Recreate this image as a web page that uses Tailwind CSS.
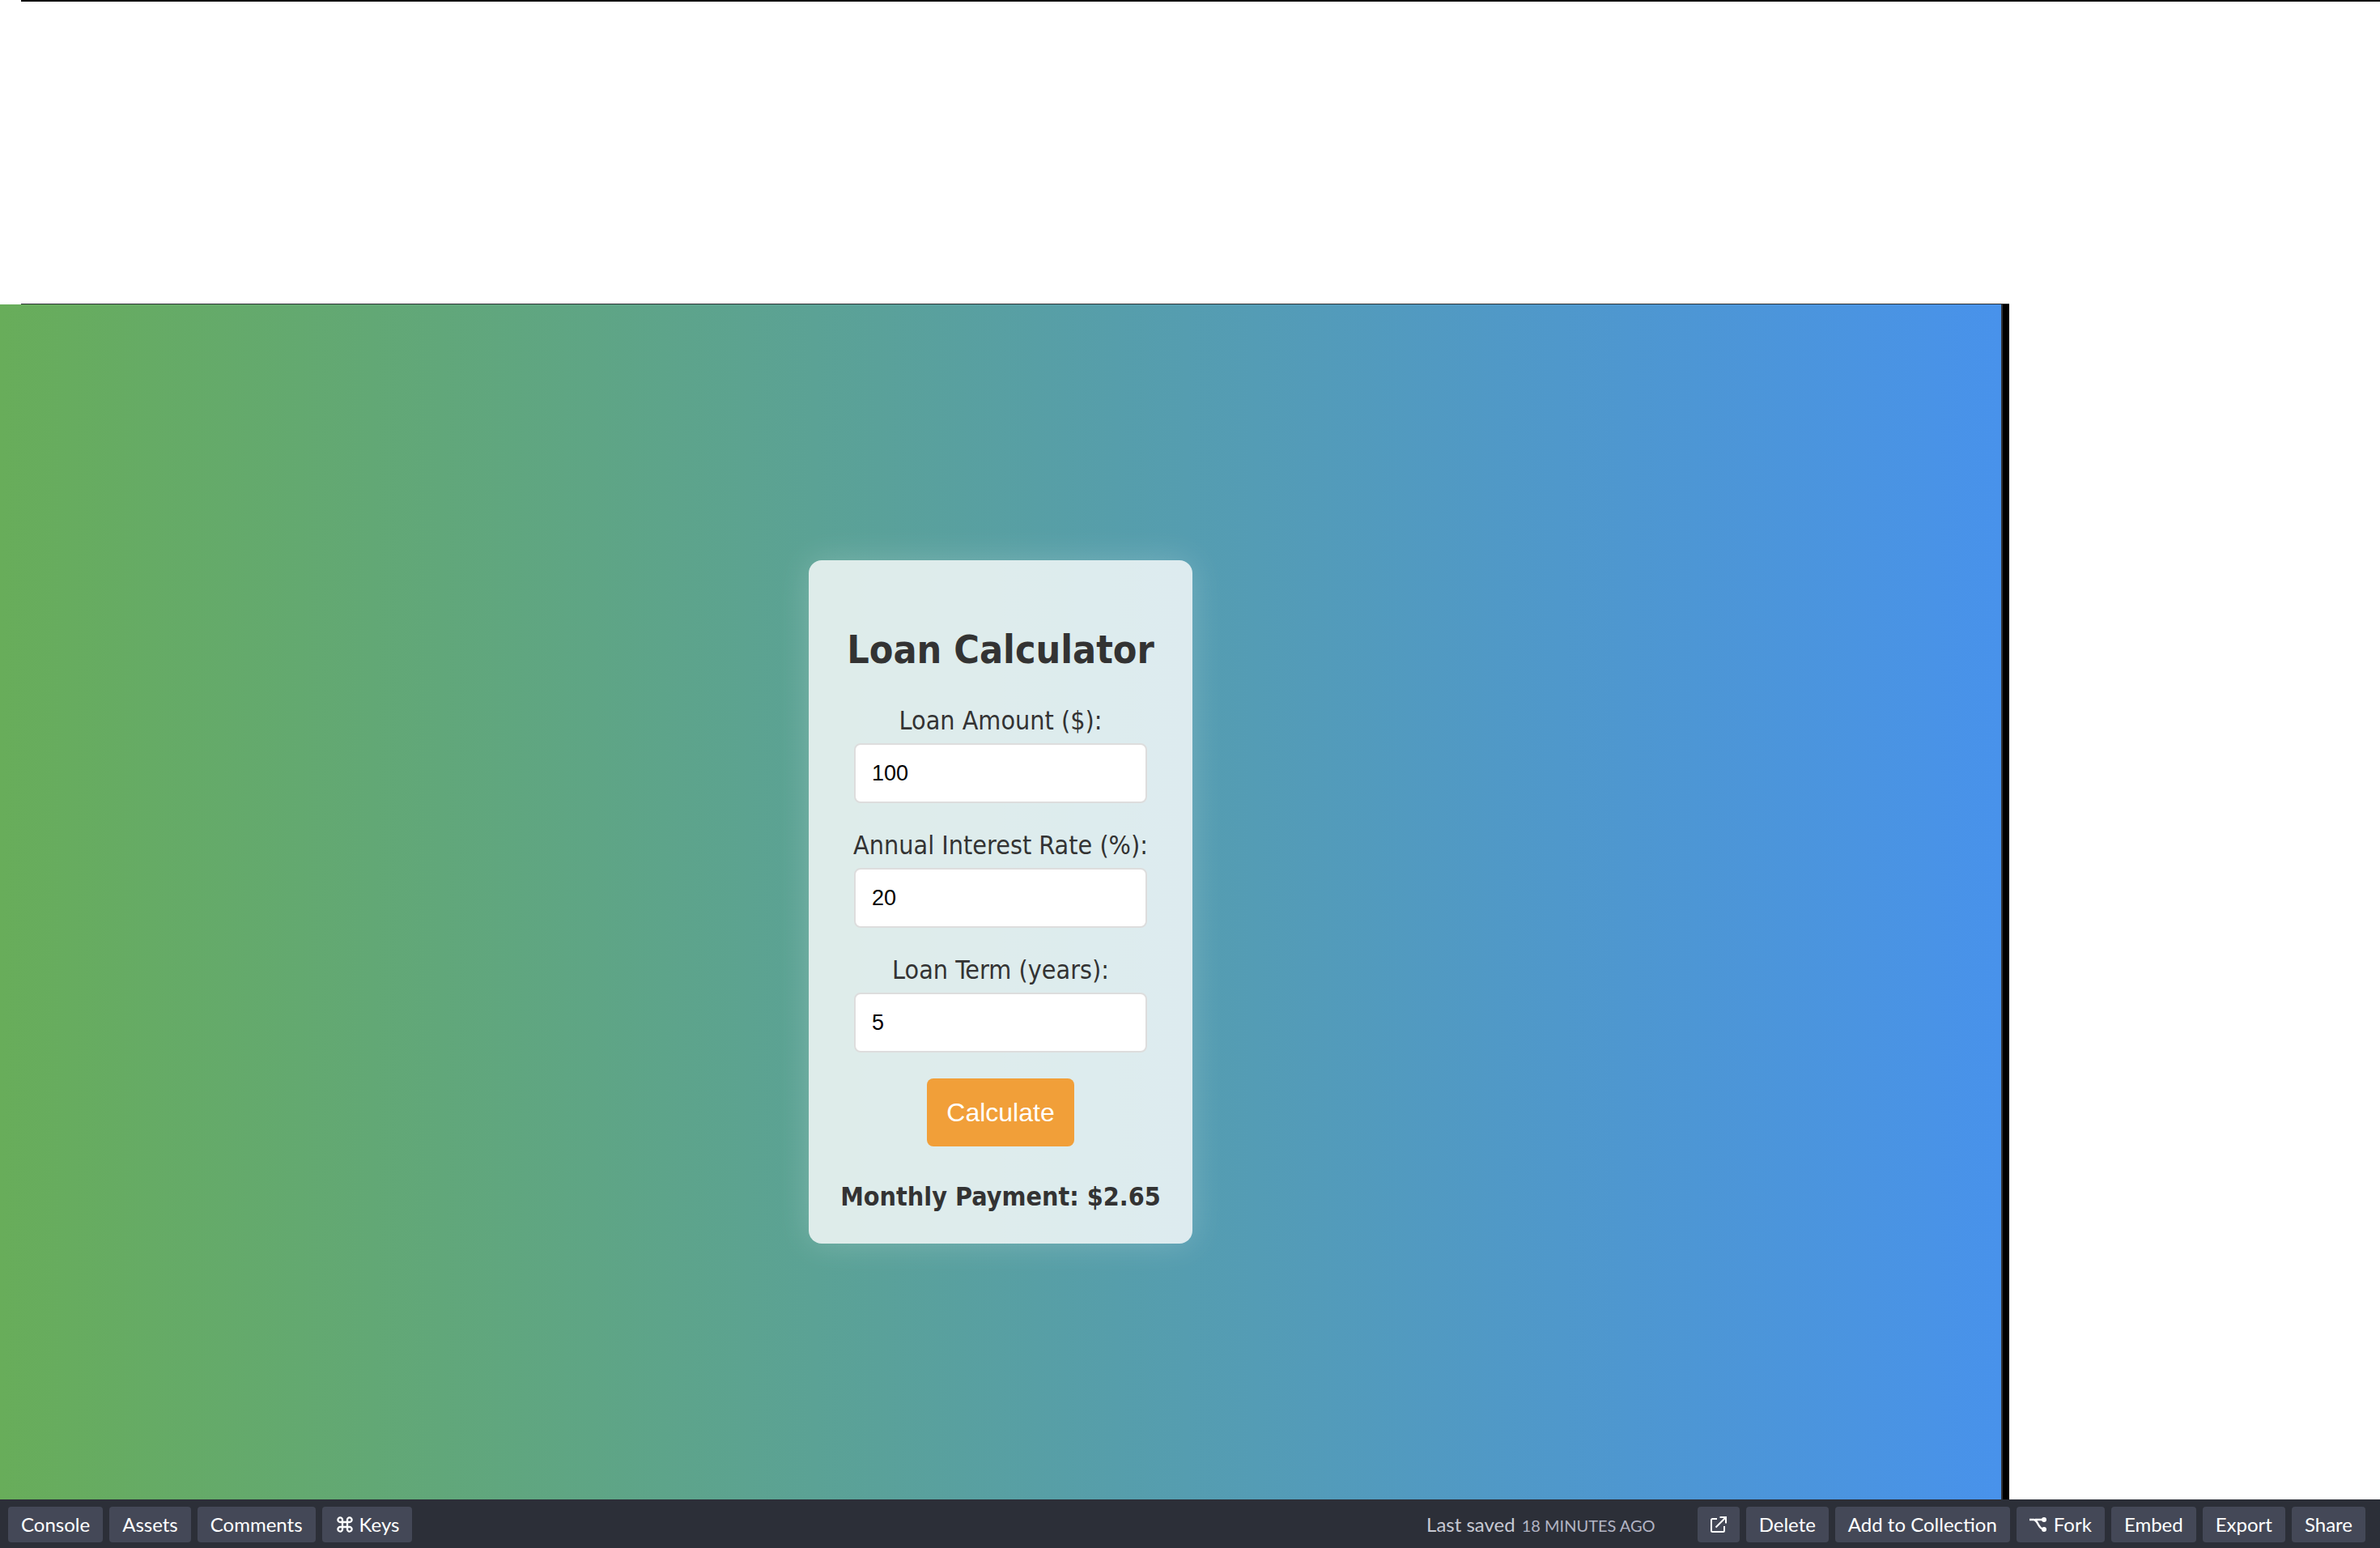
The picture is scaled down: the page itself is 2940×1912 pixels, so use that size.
<!DOCTYPE html>
<html lang="en">
<head>
<meta charset="utf-8">
<title>Loan Calculator</title>
<script src="https://cdn.jsdelivr.net/npm/@tailwindcss/browser@4"></script>
</head>
<body class="flex h-screen flex-col overflow-hidden bg-white">
  <!-- collapsed editor area -->
  <header class="flex h-[376px] shrink-0 flex-col justify-between">
    <div class="ml-[26px] h-0.5 bg-black"></div>
    <div class="mr-[458px] ml-[26px] h-px bg-[#2c3134]"></div>
  </header>

  <!-- preview -->
  <div class="flex min-h-0 flex-1">
    <main class="flex flex-1 items-center justify-center border-r-2 border-[#2f3136] bg-linear-to-r/srgb from-[#68ad5a] to-[#4892eb]">
      <form class="flex w-[474px] flex-col items-center rounded-2xl bg-white/80 px-5 pt-[82px] pb-[38px] font-['DejaVu_Sans_Condensed','DejaVu_Sans',sans-serif] text-[32px]/10 text-[#333] shadow-[0_0_40px_rgba(255,255,255,0.2)]">
        <h1 class="mb-10 text-5xl/[56px] font-bold whitespace-nowrap">Loan Calculator</h1>
        <label for="amount" class="whitespace-nowrap">Loan Amount ($):</label>
        <input id="amount" type="text" inputmode="numeric" value="100" class="mt-2 mb-8 h-[74px] w-[362px] rounded-lg border-2 border-[#ddd] bg-white px-5 font-['Liberation_Sans',Arial,sans-serif] text-[27px]/8 text-black">
        <label for="rate" class="whitespace-nowrap">Annual Interest Rate (%):</label>
        <input id="rate" type="text" inputmode="numeric" value="20" class="mt-2 mb-8 h-[74px] w-[362px] rounded-lg border-2 border-[#ddd] bg-white px-5 font-['Liberation_Sans',Arial,sans-serif] text-[27px]/8 text-black">
        <label for="term" class="whitespace-nowrap">Loan Term (years):</label>
        <input id="term" type="text" inputmode="numeric" value="5" class="mt-2 mb-8 h-[74px] w-[362px] rounded-lg border-2 border-[#ddd] bg-white px-5 font-['Liberation_Sans',Arial,sans-serif] text-[27px]/8 text-black">
        <button type="button" class="h-[84px] rounded-lg bg-[#f19f39] px-6 font-['Liberation_Sans',Arial,sans-serif] text-white">Calculate</button>
        <output class="mt-[42px] font-bold whitespace-nowrap">Monthly Payment: $2.65</output>
      </form>
    </main>
    <div class="w-2 bg-black"></div>
    <aside class="w-[458px]"></aside>
  </div>

  <!-- footer bar -->
  <footer class="flex h-[60px] shrink-0 items-center gap-2 bg-[#2c2f38] pr-[18px] pl-[10px] pt-0.5 font-[Lato,sans-serif] text-2xl/11 text-white">
    <button type="button" class="h-11 rounded-sm bg-[#444857] px-4">Console</button>
    <button type="button" class="h-11 rounded-sm bg-[#444857] px-4">Assets</button>
    <button type="button" class="h-11 rounded-sm bg-[#444857] px-4">Comments</button>
    <button type="button" class="flex h-11 items-center gap-2 rounded-sm bg-[#444857] px-4">
      <svg class="ml-0.5 size-5" viewBox="0 0 20 20" fill="none" stroke="currentColor" stroke-width="2.300"><path d="M7 7h6v6H7zM7 7H4.300A2.800 2.800 0 1 1 7 4.300zM13 7V4.300A2.800 2.800 0 1 1 15.700 7zM13 13h2.700A2.800 2.800 0 1 1 13 15.700zM7 13v2.700A2.800 2.800 0 1 1 4.300 13z"/></svg>
      Keys
    </button>
    <p class="mr-11 ml-auto flex items-baseline gap-2 text-[#c7c9d3]">Last saved <time class="text-xl text-[#b2b4c4]">18 MINUTES AGO</time></p>
    <button type="button" aria-label="Open in new window" class="flex h-11 w-[52px] items-center justify-center rounded-sm bg-[#444857]">
      <svg class="size-[22px]" viewBox="0 0 22 22" fill="none" stroke="currentColor" stroke-width="2"><path d="M9 4H3.500Q2 4 2 5.500v13Q2 20 3.500 20h13q1.500 0 1.500-1.500V13M12.500 2H20v7.500M20 2L7.500 14.500"/></svg>
    </button>
    <button type="button" class="h-11 rounded-sm bg-[#444857] px-4">Delete</button>
    <button type="button" class="h-11 rounded-sm bg-[#444857] px-4">Add to Collection</button>
    <button type="button" class="flex h-11 items-center gap-2 rounded-sm bg-[#444857] px-4">
      <svg class="h-5 w-[22px]" viewBox="0 0 22 20" fill="none" stroke="currentColor" stroke-width="2.500"><path d="M0 4h5c6 0 5 11.500 13 12M7 4h11"/><circle cx="18" cy="4" r="3" fill="currentColor" stroke="none"/><circle cx="18" cy="16" r="3" fill="currentColor" stroke="none"/></svg>
      Fork
    </button>
    <button type="button" class="h-11 rounded-sm bg-[#444857] px-4">Embed</button>
    <button type="button" class="h-11 rounded-sm bg-[#444857] px-4">Export</button>
    <button type="button" class="h-11 rounded-sm bg-[#444857] px-4">Share</button>
  </footer>
</body>
</html>
